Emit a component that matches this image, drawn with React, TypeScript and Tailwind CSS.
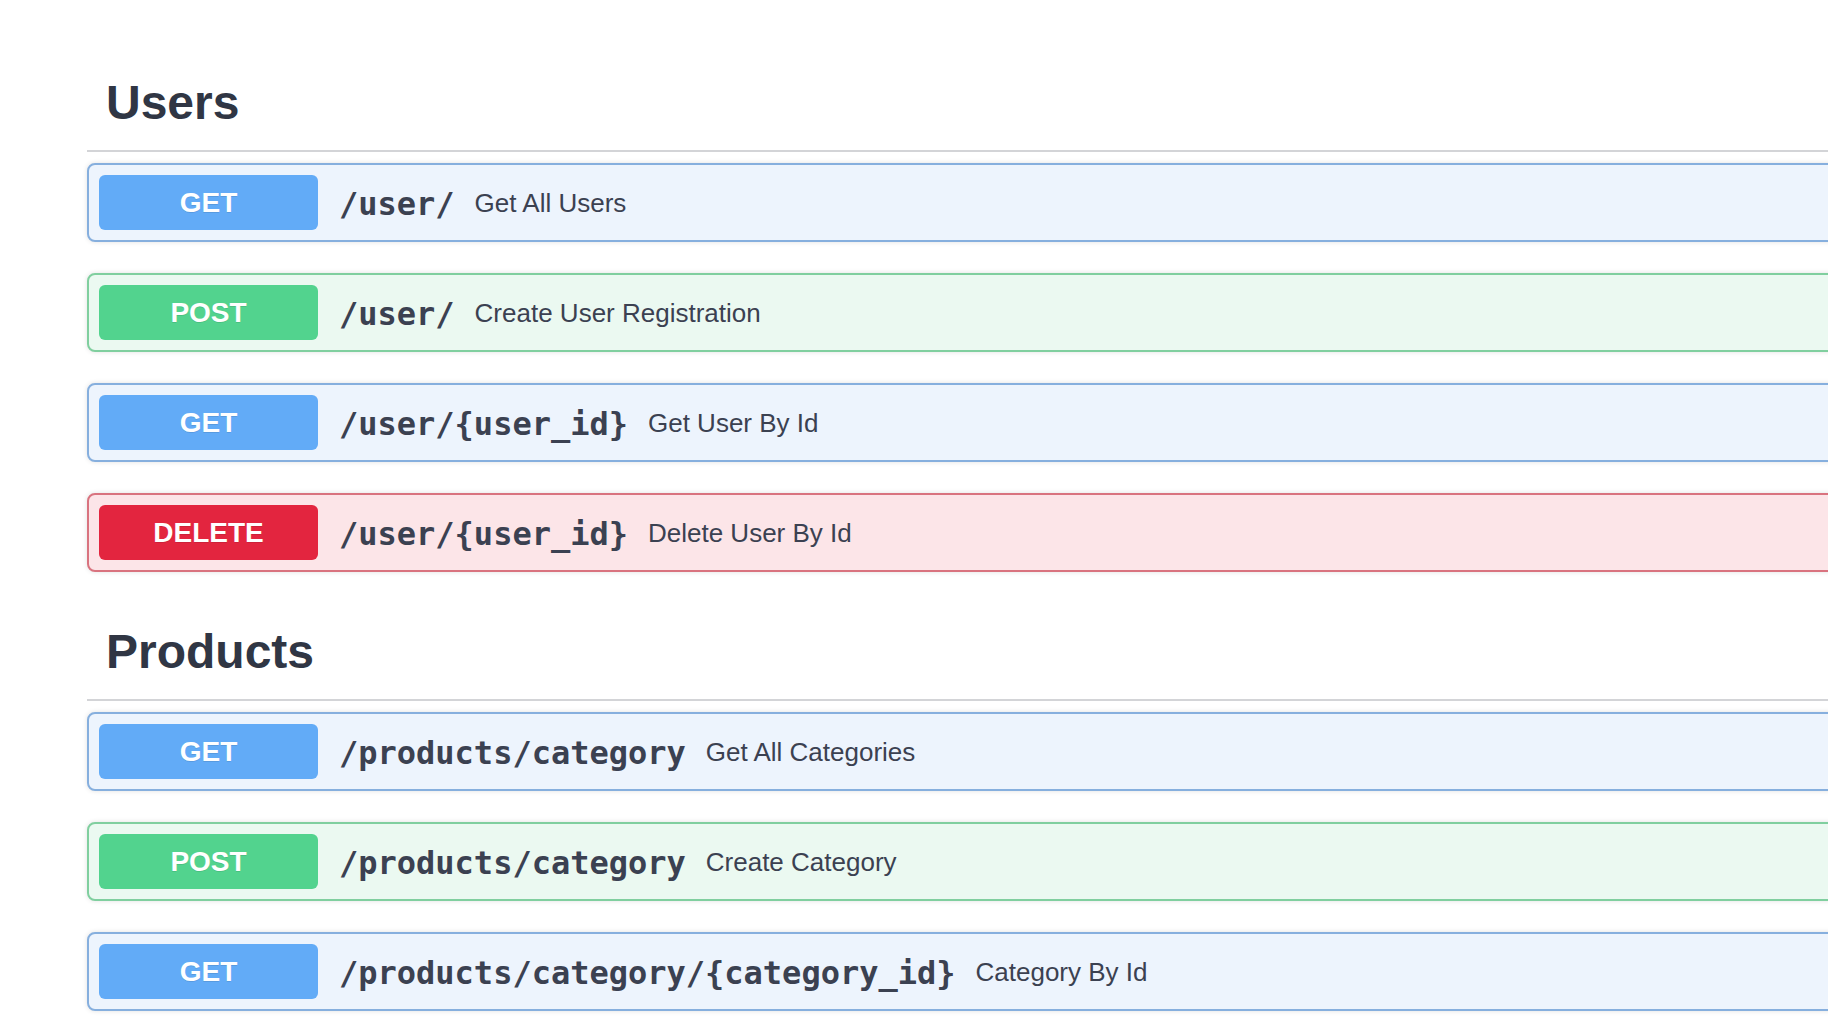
import React from "react";

type Method = "GET" | "POST" | "DELETE";

type Endpoint = {
  method: Method;
  path: string;
  summary: string;
};

type Section = {
  name: string;
  endpoints: Endpoint[];
};

const sections: Section[] = [
  {
    name: "Users",
    endpoints: [
      { method: "GET", path: "/user/", summary: "Get All Users" },
      { method: "POST", path: "/user/", summary: "Create User Registration" },
      { method: "GET", path: "/user/{user_id}", summary: "Get User By Id" },
      { method: "DELETE", path: "/user/{user_id}", summary: "Delete User By Id" },
    ],
  },
  {
    name: "Products",
    endpoints: [
      { method: "GET", path: "/products/category", summary: "Get All Categories" },
      { method: "POST", path: "/products/category", summary: "Create Category" },
      {
        method: "GET",
        path: "/products/category/{category_id}",
        summary: "Category By Id",
      },
    ],
  },
];

const rowStyles: Record<Method, { row: string; badge: string }> = {
  GET: {
    row: "border-[#86afde] bg-[#edf4fd]",
    badge: "bg-[#62abf7]",
  },
  POST: {
    row: "border-[#80cf9f] bg-[#ebf9f1]",
    badge: "bg-[#52d38e]",
  },
  DELETE: {
    row: "border-[#d9737f] bg-[#fce5e8]",
    badge: "bg-[#e3253f]",
  },
};

const EndpointRow: React.FC<Endpoint> = ({ method, path, summary }) => {
  const s = rowStyles[method];
  return (
    <div
      className={`flex items-center h-[79px] border-2 rounded-[8px] px-[10px] shadow-[0_0_5px_rgba(0,0,0,0.12)] ${s.row}`}
    >
      <div
        className={`flex items-center justify-center w-[219px] h-[55px] rounded-[6px] text-white text-[28px] font-bold font-['Liberation_Sans',sans-serif] [text-shadow:0_1px_0_rgba(0,0,0,0.1)] ${s.badge}`}
      >
        {method}
      </div>
      <span className="pl-[21px] pr-[20px] pt-[2px] text-[32px] font-bold text-[#3b4151] font-['DejaVu_Sans_Mono',monospace]">
        {path}
      </span>
      <span className="pt-[2px] text-[26px] text-[#3b4151] font-['Liberation_Sans',sans-serif]">
        {summary}
      </span>
    </div>
  );
};

export default function App() {
  return (
    <div className="w-full min-h-[1017px] bg-white overflow-hidden">
      <div className="pl-[87px] -mr-[40px] pt-[79px]">
        {sections.map((section, i) => (
          <div key={section.name} className={i > 0 ? "mt-[56px]" : ""}>
            <h2 className="pl-[19px] text-[48px] leading-[48px] font-bold text-[#303644] font-['Liberation_Sans',sans-serif]">
              {section.name}
            </h2>
            <div className="mt-[23px] h-[2px] bg-[#d3d4d7]" />
            <div className="mt-[11px] flex flex-col gap-[31px]">
              {section.endpoints.map((ep, j) => (
                <EndpointRow key={j} {...ep} />
              ))}
            </div>
          </div>
        ))}
      </div>
    </div>
  );
}
